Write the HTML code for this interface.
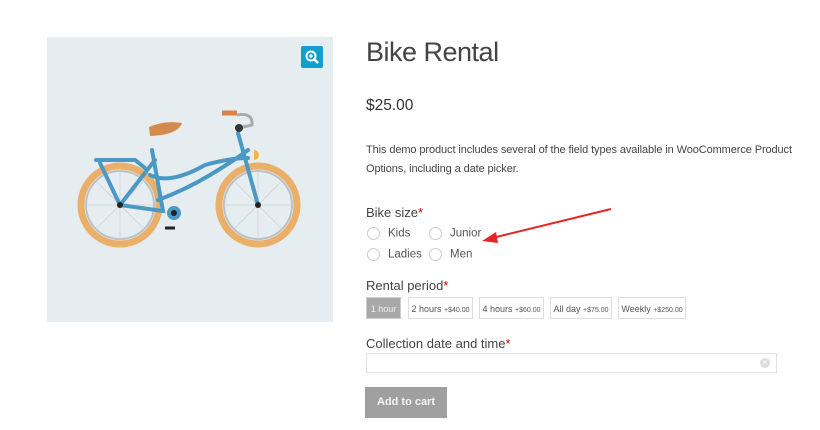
<!DOCTYPE html>
<html><head><meta charset="utf-8"><style>
body{margin:0;width:820px;height:430px;background:#fff;font-family:"Liberation Sans",sans-serif;color:#43454b;position:relative;overflow:hidden}
.a{position:absolute}
.img{left:47px;top:37px;width:286px;height:285px;background:#e6edf1}
.zoom{left:301px;top:46px;width:22px;height:22px;background:#0f9fcd;border-radius:2px}
h1{position:absolute;left:366px;top:37px;margin:0;font-weight:normal;font-size:27px;color:#444;letter-spacing:-0.5px}
.req{color:#c00}
.lbl{font-size:13px;color:#444}
.r{font-size:11.5px;color:#555}
.c{display:inline-block;width:11px;height:11px;border:1px solid #ccc;border-radius:50%;vertical-align:middle;margin-right:8px}
.btn{position:absolute;top:297px;height:22px;border:1px solid #ddd;font-size:9px;color:#555;line-height:22px;text-align:center;box-sizing:border-box}
.btn small{font-size:7px}
</style></head><body>
<div class="a img">
<svg width="286" height="285" viewBox="0 0 286 285">
<g transform="translate(-47,-37)">
<circle cx="120" cy="205" r="39" fill="none" stroke="#eab06a" stroke-width="7"/>
<circle cx="120" cy="205" r="34" fill="none" stroke="#b9c2c8" stroke-width="2"/>
<circle cx="258" cy="205" r="39" fill="none" stroke="#eab06a" stroke-width="7"/>
<circle cx="258" cy="205" r="34" fill="none" stroke="#b9c2c8" stroke-width="2"/>
<g stroke="#cdd3d7" stroke-width="0.8">
<path d="M86 205H154M120 171V239M96 181L144 229M144 181L96 229M224 205H292M258 171V239M234 181L282 229M282 181L234 229"/>
</g>
<g stroke="#4a98c4" stroke-width="4" fill="none" stroke-linecap="round">
<path d="M120 205L163 211L152 150"/>
<path d="M120 205L155 160"/>
<path d="M150 175Q170 185 205 165Q230 158 248 158"/>
<path d="M158 200Q185 190 210 175Q235 160 248 150"/>
<path d="M238 133L258 205"/>
<path d="M96 160H135L145 168M100 163L120 205"/>
</g>
<path d="M149 127Q165 120 182 123Q178 135 150 136Z" fill="#d48a4a"/>
<path d="M222 113H237" stroke="#e07f3f" stroke-width="5"/>
<path d="M237 115Q253 112 252 125L239 128" stroke="#aaa" stroke-width="3" fill="none"/>
<circle cx="239" cy="128" r="4" fill="#333"/>
<path d="M254 150a5 5 0 0 1 0 10z" fill="#f3b53b"/>
<circle cx="174" cy="213" r="7" fill="#4a98c4"/>
<circle cx="174" cy="213" r="3" fill="#222"/>
<path d="M165 228h10" stroke="#222" stroke-width="3"/>
<circle cx="120" cy="205" r="3" fill="#222"/><circle cx="258" cy="205" r="3" fill="#222"/>
</g></svg></div>
<div class="a zoom"><svg width="22" height="22"><circle cx="10" cy="10" r="4.5" fill="none" stroke="#fff" stroke-width="2"/><path d="M13 13l4 4" stroke="#fff" stroke-width="2.5"/><path d="M8 10h4M10 8v4" stroke="#fff" stroke-width="1.3"/></svg></div>
<h1>Bike Rental</h1>
<div class="a" style="left:366px;top:97px;font-size:15.5px;color:#333">$25.00</div>
<div class="a" style="left:366px;top:141px;font-size:11px;line-height:18.5px;color:#444;width:450px;white-space:nowrap;letter-spacing:-0.1px">This demo product includes several of the field types available in WooCommerce Product<br>Options, including a date picker.</div>
<div class="a lbl" style="left:366px;top:205px">Bike size<span class="req">*</span></div>
<div class="a r" style="left:367px;top:227px"><span class="c"></span>Kids</div>
<div class="a r" style="left:429px;top:227px"><span class="c"></span>Junior</div>
<div class="a r" style="left:367px;top:248px"><span class="c"></span>Ladies</div>
<div class="a r" style="left:429px;top:248px"><span class="c"></span>Men</div>
<svg class="a" style="left:470px;top:205px" width="150" height="45"><path d="M141 4L22 33" stroke="#e52424" stroke-width="2"/><path d="M12 36L26 27L28 38Z" fill="#e52424"/></svg>
<div class="a lbl" style="left:366px;top:278px">Rental period<span class="req">*</span></div>
<div class="btn" style="left:366px;width:35px;background:#a9a9a9;color:#eee;border-color:#ccc">1 hour</div>
<div class="btn" style="left:408px;width:65px">2 hours <small>+$40.00</small></div>
<div class="btn" style="left:479px;width:65px">4 hours <small>+$60.00</small></div>
<div class="btn" style="left:550px;width:62px">All day <small>+$75.00</small></div>
<div class="btn" style="left:618px;width:68px">Weekly <small>+$250.00</small></div>
<div class="a lbl" style="left:366px;top:336px">Collection date and time<span class="req">*</span></div>
<div class="a" style="left:366px;top:353px;width:411px;height:20px;border:1px solid #e2e2e2;box-sizing:border-box"></div>
<div class="a" style="left:760px;top:358px;width:10px;height:10px;border-radius:50%;background:#ddd;color:#fff;font-size:8px;line-height:10px;text-align:center">×</div>
<div class="a" style="left:365px;top:387px;width:82px;height:31px;background:#a0a0a0;color:#f4f4f4;font-size:11px;font-weight:bold;line-height:31px;text-align:center">Add to cart</div>
</body></html>
